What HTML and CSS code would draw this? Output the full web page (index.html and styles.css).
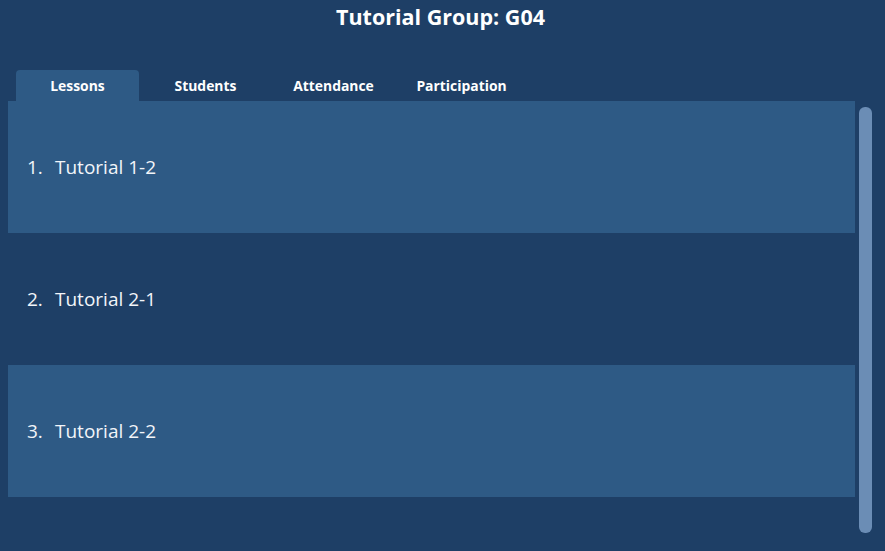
FILE: index.html
```html
<!DOCTYPE html>
<html>
<head>
<meta charset="utf-8">
<link rel="stylesheet" href="styles.css">
</head>
<body>
<div class="app">
  <h1 class="title">Tutorial Group: G04</h1>
  <div class="tabs">
    <div class="tab active">Lessons</div>
    <div class="tab">Students</div>
    <div class="tab">Attendance</div>
    <div class="tab">Participation</div>
  </div>
  <div class="content">
    <div class="list">
      <div class="row odd"><span class="num">1.</span><span>Tutorial 1-2</span></div>
      <div class="row"><span class="num">2.</span><span>Tutorial 2-1</span></div>
      <div class="row odd"><span class="num">3.</span><span>Tutorial 2-2</span></div>
    </div>
    <div class="scroll"><div class="thumb"></div></div>
  </div>
</div>
</body>
</html>
```
FILE: styles.css
```css
html, body {
  margin: 0;
  padding: 0;
  background: #1e3f66;
  width: 885px;
  height: 551px;
  overflow: hidden;
  font-family: "Open Sans", "Noto Sans", sans-serif;
  color: #ffffff;
}
.app {
  display: flex;
  flex-direction: column;
  height: 551px;
}
.title {
  margin: 0;
  padding-top: 3px;
  height: 70px;
  box-sizing: border-box;
  text-align: center;
  font-size: 21.5px;
  font-weight: 700;
  line-height: 28px;
  padding-right: 4px;
}
.tabs {
  display: flex;
  gap: 5px;
  padding-left: 16px;
  height: 31px;
}
.tab {
  width: 123px;
  height: 31px;
  border-radius: 4px 4px 0 0;
  font-size: 13.9px;
  font-weight: 700;
  text-align: center;
  line-height: 31px;
}
.tab.active {
  background: #2e5a85;
}
.content {
  display: flex;
  padding-left: 8px;
}
.list {
  width: 847px;
  display: flex;
  flex-direction: column;
}
.row {
  height: 132px;
  display: flex;
  align-items: center;
  padding-left: 19px;
  font-size: 19px;
  font-weight: 400;
  color: #f2f5f9;
}
.row.odd {
  background: #2e5a85;
}
.num {
  width: 28px;
}
.scroll {
  padding: 6px 0 0 4px;
}
.thumb {
  width: 13px;
  height: 426px;
  border-radius: 6px;
  background: #6b8db5;
}
```
